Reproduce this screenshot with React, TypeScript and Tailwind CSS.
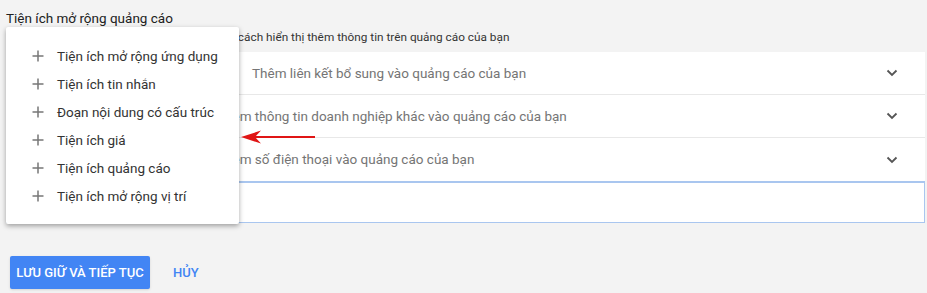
import React from "react";

const Chevron = () => (
  <svg width="12" height="8" viewBox="0 0 12 8" className="shrink-0">
    <path d="M1.5 1.5 L6 6 L10.5 1.5" fill="none" stroke="#555" strokeWidth="1.8" />
  </svg>
);

const Plus = () => (
  <svg width="12" height="12" viewBox="0 0 12 12" className="shrink-0">
    <path d="M6 0.5 V11.5 M0.5 6 H11.5" fill="none" stroke="#777" strokeWidth="1.5" />
  </svg>
);

const menuItems = [
  "Tiện ích mở rộng ứng dụng",
  "Tiện ích tin nhắn",
  "Đoạn nội dung có cấu trúc",
  "Tiện ích giá",
  "Tiện ích quảng cáo",
  "Tiện ích mở rộng vị trí",
];

export default function App() {
  return (
    <div
      className="relative w-[927px] h-[293px] bg-[#f3f3f3] overflow-hidden text-[#212121]"
      style={{ fontFamily: "Roboto, 'Noto Sans', sans-serif" }}
    >
      <div className="pl-[6px] pr-[2px] pt-[8px]">
        <div className="text-[13.5px] leading-[20px] h-[20px]">Tiện ích mở rộng quảng cáo</div>
        <div className="text-[11.8px] leading-[16px] h-[24px] pt-[1px] pl-[20px] text-[#333] whitespace-nowrap">
          Tiện ích mở rộng cho phép bạn cải thiện cách hiển thị thêm thông tin trên quảng cáo của bạn
        </div>
        <div className="bg-white">
          <div className="h-[43px] flex items-center justify-between border-b border-[#e8e8e8] pr-[27px]">
            <span className="pl-[246px] text-[13.5px] text-[#757575]">Thêm liên kết bổ sung vào quảng cáo của bạn</span>
            <Chevron />
          </div>
          <div className="h-[43px] flex items-center justify-between border-b border-[#e8e8e8] pr-[27px]">
            <span className="pl-[211px] text-[13.5px] text-[#757575]">Thêm thông tin doanh nghiệp khác vào quảng cáo của bạn</span>
            <Chevron />
          </div>
          <div className="h-[43px] flex items-center justify-between pr-[27px]">
            <span className="pl-[211px] text-[13.5px] text-[#757575]">Thêm số điện thoại vào quảng cáo của bạn</span>
            <Chevron />
          </div>
          <div className="h-[42px] border border-[#a9c6ef] border-t-2 bg-white"></div>
        </div>
        <div className="flex items-center mt-[33px] pl-[4px]">
          <button className="w-[140px] h-[33px] rounded-[2px] bg-[#4285f4] text-white text-[13px] font-medium shadow-sm">
            LƯU GIỮ VÀ TIẾP TỤC
          </button>
          <button className="ml-[23px] text-[13px] font-medium text-[#4285f4]">HỦY</button>
        </div>
      </div>

      <div className="absolute left-[6px] top-[27px] w-[233px] h-[197px] bg-white rounded-[2px] shadow-[0_2px_5px_rgba(0,0,0,0.35)] pt-[15px]">
        {menuItems.map((t) => (
          <div key={t} className="h-[28px] flex items-center pl-[26px] text-[13.5px] text-[#333]">
            <Plus />
            <span className="ml-[13px]">{t}</span>
          </div>
        ))}
      </div>

      <svg className="absolute left-[241px] top-[129px]" width="76" height="16" viewBox="0 0 76 16">
        <path d="M10 8 H74" stroke="#e01515" strokeWidth="2.2" fill="none" />
        <path d="M0 8 L20 1.5 L14 8 L20 14.5 Z" fill="#e01515" />
      </svg>
    </div>
  );
}
